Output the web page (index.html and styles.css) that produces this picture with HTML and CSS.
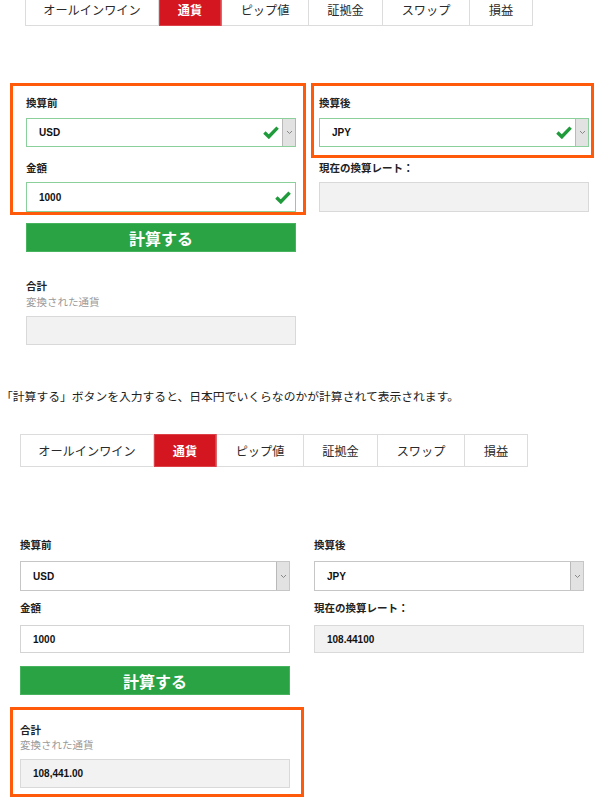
FILE: index.html
```html
<!DOCTYPE html>
<html lang="ja">
<head>
<meta charset="utf-8">
<title>通貨換算</title>
<link rel="stylesheet" href="styles.css">
</head>
<body>
<section class="shot shot-top">
  <nav class="tabs">
    <span class="tab t1">オールインワイン</span>
    <span class="tab t2 active">通貨</span>
    <span class="tab t3">ピップ値</span>
    <span class="tab t4">証拠金</span>
    <span class="tab t5">スワップ</span>
    <span class="tab t6">損益</span>
  </nav>
  <div class="form">
    <div class="col">
      <div class="group hl hl-a">
        <div class="field">
          <div class="label">換算前</div>
          <div class="select valid"><span class="val">USD</span><svg class="check" width="16" height="13" viewBox="0 0 16 13"><path d="M1.4 6.6 L5.8 10.8 L14.6 1.6" fill="none" stroke="#1f9b3b" stroke-width="3.4"/></svg><span class="arrow"><svg width="7" height="5" viewBox="0 0 7 5"><path d="M1 1 L3.5 3.5 L6 1" fill="none" stroke="#888" stroke-width="1"/></svg></span></div>
        </div>
        <div class="field f2">
          <div class="label">金額</div>
          <div class="input valid"><span class="val">1000</span><svg class="check" width="16" height="13" viewBox="0 0 16 13"><path d="M1.4 6.6 L5.8 10.8 L14.6 1.6" fill="none" stroke="#1f9b3b" stroke-width="3.4"/></svg></div>
        </div>
      </div>
      <div class="btn">計算する</div>
      <div class="total">
        <div class="label">合計</div>
        <div class="sub">変換された通貨</div>
        <div class="box readonly"></div>
      </div>
    </div>
    <div class="col">
      <div class="group hl hl-b">
        <div class="field">
          <div class="label">換算後</div>
          <div class="select valid"><span class="val">JPY</span><svg class="check" width="16" height="13" viewBox="0 0 16 13"><path d="M1.4 6.6 L5.8 10.8 L14.6 1.6" fill="none" stroke="#1f9b3b" stroke-width="3.4"/></svg><span class="arrow"><svg width="7" height="5" viewBox="0 0 7 5"><path d="M1 1 L3.5 3.5 L6 1" fill="none" stroke="#888" stroke-width="1"/></svg></span></div>
        </div>
      </div>
      <div class="field f2">
        <div class="label">現在の換算レート：</div>
        <div class="input readonly"></div>
      </div>
    </div>
  </div>
</section>

<p class="note">「計算する」ボタンを入力すると、日本円でいくらなのかが計算されて表示されます。</p>

<section class="shot shot-bottom">
  <nav class="tabs">
    <span class="tab t1">オールインワイン</span>
    <span class="tab t2 active">通貨</span>
    <span class="tab t3">ピップ値</span>
    <span class="tab t4">証拠金</span>
    <span class="tab t5">スワップ</span>
    <span class="tab t6">損益</span>
  </nav>
  <div class="form">
    <div class="col">
      <div class="field">
        <div class="label">換算前</div>
        <div class="select"><span class="val">USD</span><span class="arrow"><svg width="7" height="5" viewBox="0 0 7 5"><path d="M1 1 L3.5 3.5 L6 1" fill="none" stroke="#888" stroke-width="1"/></svg></span></div>
      </div>
      <div class="field f2">
        <div class="label">金額</div>
        <div class="input"><span class="val">1000</span></div>
      </div>
      <div class="btn">計算する</div>
      <div class="total hl hl-c">
        <div class="label">合計</div>
        <div class="sub">変換された通貨</div>
        <div class="box readonly"><span class="val">108,441.00</span></div>
      </div>
    </div>
    <div class="col">
      <div class="field">
        <div class="label">換算後</div>
        <div class="select"><span class="val">JPY</span><span class="arrow"><svg width="7" height="5" viewBox="0 0 7 5"><path d="M1 1 L3.5 3.5 L6 1" fill="none" stroke="#888" stroke-width="1"/></svg></span></div>
      </div>
      <div class="field f2">
        <div class="label">現在の換算レート：</div>
        <div class="input readonly"><span class="val">108.44100</span></div>
      </div>
    </div>
  </div>
</section>
</body>
</html>
```

FILE: styles.css
```css
* { box-sizing: border-box; }

html, body {
  margin: 0;
  padding: 0;
  background: #fff;
}

body {
  font-family: "Noto Sans CJK JP", "Noto Sans", sans-serif;
  color: #333;
  width: 600px;
  height: 798px;
  overflow: hidden;
}

/* ---------- tabs ---------- */
.tabs {
  display: flex;
  width: max-content;
  height: 33px;
  border: 1px solid #dcdcdc;
  border-right: none;
}

.tab {
  display: flex;
  align-items: center;
  justify-content: center;
  border-right: 1px solid #dcdcdc;
  font-size: 12.2px;
  color: #2a2a2a;
  white-space: nowrap;
}

.t1 { width: 133px; }
.t2 { width: 63px; }
.t3 { width: 87px; }
.t4 { width: 74px; }
.t5 { width: 87px; }
.t6 { width: 63px; }

.tab.active {
  background: #d3161f;
  border-right-color: #d86a6f;
  margin: -1px 0;
  color: #fff;
  font-weight: bold;
  box-shadow: inset 0 0 0 1px #dc4048;
}

/* ---------- form ---------- */
.form {
  display: flex;
}

.col {
  width: 270px;
  display: flex;
  flex-direction: column;
}

.label {
  font-size: 10.5px;
  font-weight: bold;
  line-height: 14px;
  height: 14px;
  color: #222;
  white-space: nowrap;
}

.sub {
  font-size: 10.5px;
  line-height: 14px;
  height: 14px;
  color: #9a9a9a;
}

.select, .input, .box {
  display: flex;
  align-items: center;
  border: 1px solid #d4d4d4;
  background: #fff;
}

.select { border-color: #c6c6c6; }

.select.valid, .input.valid { border-color: #8bd09b; }

.readonly {
  background: #f2f2f2;
  border-color: #d9d9d9;
}

.val {
  padding-left: 12px;
  font-family: "Liberation Sans", Arial, sans-serif;
  font-weight: bold;
  font-size: 10px;
  color: #111;
}

.check {
  margin-left: auto;
  margin-right: 3px;
  display: block;
}

.input .check { margin-right: 4px; }

.arrow {
  margin-left: auto;
  width: 13px;
  align-self: stretch;
  display: flex;
  align-items: center;
  justify-content: center;
  background: #e2e2e2;
  border-left: 1px solid #b9b9b9;
}

.select .check + .arrow { margin-left: 0; }

.btn {
  display: flex;
  align-items: center;
  justify-content: center;
  height: 29px;
  background: #2aa344;
  border: 1px solid #47b35e;
  color: #fff;
  font-weight: bold;
  font-size: 16px;
  line-height: 1;
}

/* ---------- highlight annotations ---------- */
.hl { position: relative; }

.hl::before {
  content: "";
  position: absolute;
  border: 3px solid #ff5a0a;
  pointer-events: none;
}

.hl-a::before { top: -13px; bottom: -3px; left: -16px; right: -10px; }
.hl-b::before { top: -13px; bottom: -11px; left: -8px; right: -5px; }
.hl-c::before { top: -16px; bottom: -9px; left: -10px; right: -14px; }

/* ---------- top screenshot ---------- */
.shot-top { padding-left: 26px; }
.shot-top .tabs { margin-top: -7px; margin-left: -1px; }
.shot-top .form { padding-top: 70px; gap: 23px; }
.shot-top .label + .select,
.shot-top .label + .input { margin-top: 8px; }
.shot-top .select { height: 29px; }
.shot-top .f2 { margin-top: 14px; }
.shot-top .f2 .label + .input { margin-top: 7px; }
.shot-top .input { height: 30px; }
.shot-top .btn { margin-top: 11px; }
.shot-top .total { margin-top: 27px; }
.shot-top .sub { margin-top: 2px; }
.shot-top .box { margin-top: 7px; height: 29px; }

/* ---------- note ---------- */
.note {
  margin: 43px 0 0 1px;
  font-size: 11.8px;
  line-height: 16px;
  color: #222;
  white-space: nowrap;
}

/* ---------- bottom screenshot ---------- */
.shot-bottom { padding-left: 20px; margin-top: 30px; }
.shot-bottom .form { padding-top: 71px; gap: 24px; }
.shot-bottom .label + .select { margin-top: 9px; }
.shot-bottom .select { height: 30px; }
.shot-bottom .f2 { margin-top: 10px; }
.shot-bottom .f2 .label + .input { margin-top: 10px; }
.shot-bottom .input { height: 28px; }
.shot-bottom .btn { margin-top: 13px; }
.shot-bottom .total { margin-top: 28px; }
.shot-bottom .sub { margin-top: 1px; }
.shot-bottom .box { margin-top: 7px; height: 29px; }
```
